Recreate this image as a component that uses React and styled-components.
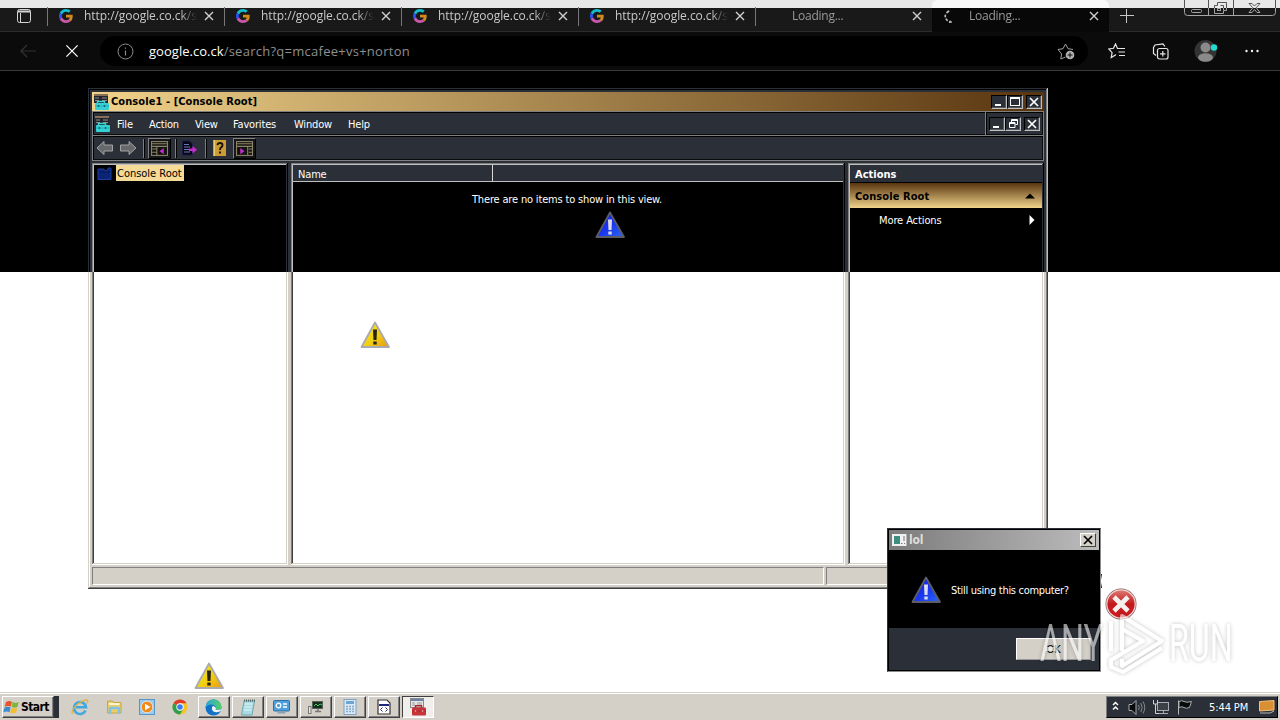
import React from "react";
import styled, { createGlobalStyle, css } from "styled-components";

const FACE = "#d4d0c8";
const FACE_INV = "#2b2f37";
const UI = `"DejaVu Sans Condensed", "DejaVu Sans", sans-serif`;
const EDGE_UI = `"Open Sans", "Noto Sans", sans-serif`;

// screen row where the inverted band ends
const SPLIT = 272;

const invert = (hex) =>
  "#" + (0xffffff - parseInt(hex.slice(1), 16)).toString(16).padStart(6, "0");

// vertical fill: inverted above `at`, normal below
const fill = (color, at) =>
  `linear-gradient(to bottom, ${invert(color)} ${at}px, ${color} ${at}px)`;

// one 1px ring of a classic bevel, as four background strips
const ring = (i, tl, br, at) => {
  const len = `calc(100% - ${2 * i}px)`;
  return [
    `${fill(br, at - i)} right ${i}px top ${i}px / 1px ${len} no-repeat`,
    `linear-gradient(${br}, ${br}) left ${i}px bottom ${i}px / ${len} 1px no-repeat`,
    `${fill(tl, at - i)} left ${i}px top ${i}px / 1px ${len} no-repeat`,
    `linear-gradient(${invert(tl)}, ${invert(tl)}) left ${i}px top ${i}px / ${len} 1px no-repeat`,
  ].join(",");
};

const GlobalStyles = createGlobalStyle`
  * { box-sizing: border-box; }
  body {
    margin: 0;
    background: #fff;
    overflow: hidden;
    font-family: ${UI};
    font-stretch: condensed;
    font-size: 11px;
    letter-spacing: -0.17px;
  }
  svg { display: block; flex: none; }
`;

const Desktop = styled.div`
  position: relative;
  width: 1280px;
  height: 720px;
  overflow: hidden;
  display: flex;
  flex-direction: column;
  background: #fff;
`;

/* ---------- browser ---------- */

const Browser = styled.div`
  height: ${SPLIT}px;
  background: #000;
  font-family: ${EDGE_UI};
  font-stretch: normal;
  letter-spacing: 0;
`;

const TabStrip = styled.div`
  display: flex;
  height: 32px;
  background: linear-gradient(#e8e8e8 8px, #191919 8px);
  border-bottom: 1px solid #2c2c2c;
`;

const TabActions = styled.div`
  width: 47px;
  padding: 9px 0 0 17px;
`;

const Tab = styled.div`
  display: flex;
  align-items: center;
  width: 177px;
  height: 32px;
  padding: 0 10px 0 12px;
  font-size: 12px;
  color: ${(p) => (p.$dim ? "#9a9a9a" : "#c9c9c9")};
  background: ${(p) =>
    p.$active
      ? "linear-gradient(#f8f8f8 8px, #080808 8px)"
      : "linear-gradient(#777, #777) left 7px / 1px 19px no-repeat"};
  ${(p) => p.$active && "border-radius: 6px 6px 0 0;"}
`;

const TabIcon = styled.span`
  width: 14px;
  height: 14px;
  margin-right: 11px;
`;

const TabTitle = styled.span`
  flex: 1;
  height: 18px;
  line-height: 17px;
  overflow: hidden;
  white-space: nowrap;
  letter-spacing: ${(p) => (p.$dim ? "-0.25px" : "-0.05px")};
  -webkit-mask-image: linear-gradient(to right, #000 96px, transparent 113px);
`;

const NewTab = styled.div`
  width: 75px;
  padding: 9px 0 0 11px;
`;

const AddressRow = styled.div`
  display: flex;
  align-items: center;
  height: 39px;
  background: #0b0b0b;
  border-bottom: 1px solid #3a3a3a;
`;

const NavButton = styled.div`
  display: flex;
  justify-content: center;
  width: ${(p) => p.$w}px;
`;

const UrlPill = styled.div`
  display: flex;
  align-items: center;
  width: 988px;
  height: 30px;
  padding: 0 13px 0 17px;
  border-radius: 15px;
  background: #000;
  font-size: 13px;
  color: #8f8f8f;
`;

const Url = styled.span`
  flex: 1;
  margin-left: 15px;
  letter-spacing: 0.26px;
  white-space: nowrap;
  b {
    font-weight: 400;
    letter-spacing: 0.03px;
    color: #fff;
  }
`;

/* ---------- management console ---------- */

const Console = styled.div`
  position: absolute;
  left: 88px;
  top: 88px;
  width: 960px;
  height: 501px;
  padding: 4px;
  display: flex;
  flex-direction: column;
  background: ${ring(0, FACE, "#404040", 184)}, ${ring(1, "#ffffff", "#808080", 184)},
    ${fill(FACE, 184)};
  color: #fff;
`;

const TitleBar = styled.div`
  display: flex;
  align-items: center;
  height: 19px;
  padding: 0 2px 0 1px;
  background: linear-gradient(to right, #f0d28a, #59350f);
  color: #000;
  font-weight: 700;
  letter-spacing: 0.08px;
`;

const TitleText = styled.span`
  flex: 1;
  margin-left: 2px;
`;

const Caption = styled.span`
  display: flex;
  align-items: center;
  justify-content: center;
  width: 16px;
  height: 14px;
  margin-left: ${(p) => p.$gap || 0}px;
  background: ${FACE_INV};
  border: 1px solid;
  border-color: #000 #bfbfbf #bfbfbf #000;
  box-shadow: inset -1px -1px #55585f;
`;

const Bar = styled.div`
  display: flex;
  height: 25px;
  border: 1px solid #7f7f7f;
  border-width: ${(p) => (p.$top ? "1px" : "0 1px 1px")};
  box-shadow: inset 1px 1px #000, inset -1px -1px #0a0b0d;
`;

const MenuBar = styled.div`
  display: flex;
  align-items: center;
  width: 893px;
  padding: 1px 0 0 1px;
  border-right: 1px solid #7f7f7f;
  box-shadow: 1px 0 #000;
`;

const MenuItem = styled.span`
  width: ${(p) => p.$w}px;
`;

const ChildButtons = styled.div`
  display: flex;
  align-items: center;
  padding-left: 3px;
`;

const Tools = styled.div`
  display: flex;
  align-items: center;
  padding-left: 3px;
`;

const Tool = styled.span`
  display: flex;
  align-items: center;
  justify-content: center;
  width: 23px;
  height: 21px;
  ${(p) =>
    p.$down &&
    css`
      background: #15171b;
      border: 1px solid;
      border-color: #7f7f7f #000 #000 #7f7f7f;
    `}
`;

const Divider = styled.span`
  width: 1px;
  height: 19px;
  margin: 0 ${(p) => p.$r}px 0 ${(p) => p.$l}px;
  background: #7f7f7f;
  box-shadow: 1px 0 #000;
`;

const Panes = styled.div`
  display: flex;
  gap: 3px;
  height: 402px;
  margin: 2px 0;
`;

const Pane = styled.div`
  width: ${(p) => p.$w}px;
  padding: 2px;
  background: ${ring(0, "#808080", "#ffffff", 109)}, ${ring(1, "#404040", FACE, 109)},
    ${fill("#ffffff", 109)};
`;

const TreeNode = styled.div`
  display: flex;
  align-items: center;
  height: 16px;
  padding-left: 3px;
`;

const Selected = styled.span`
  height: 16px;
  margin-left: 4px;
  padding: 0 2px 0 1px;
  line-height: 17px;
  background: #f5db95;
  color: #000;
  letter-spacing: -0.02px;
`;

const ListHeader = styled.div`
  display: flex;
  height: 17px;
  line-height: 19px;
  background: ${FACE_INV};
  border-bottom: 1px solid #bfbfbf;
  span {
    width: 200px;
    padding-left: 5px;
    border-right: 1px solid #d8d8d8;
  }
`;

const Empty = styled.div`
  padding: 11px 2px 0 0;
  text-align: center;
`;

const ActionsHeader = styled.div`
  height: 18px;
  padding-left: 5px;
  line-height: 19px;
  background: ${FACE_INV};
  border-bottom: 1px solid #000;
  font-weight: 700;
  letter-spacing: 0.02px;
`;

const ActionsGroup = styled.div`
  display: flex;
  align-items: center;
  justify-content: space-between;
  height: 25px;
  padding: 1px 7px 0 5px;
  background: linear-gradient(#59350f, #f0d48c);
  color: #000;
  font-weight: 700;
  letter-spacing: 0.08px;
`;

const ActionItem = styled.div`
  display: flex;
  align-items: center;
  justify-content: space-between;
  height: 24px;
  padding: 0 7px 0 29px;
  letter-spacing: -0.1px;
`;

const StatusBar = styled.div`
  display: flex;
  gap: 2px;
  height: 18px;
`;

const StatusCell = styled.div`
  width: ${(p) => p.$w}px;
  border: 1px solid;
  border-color: #808080 #fff #fff #808080;
`;

/* ---------- message box ---------- */

const Dialog = styled.div`
  position: absolute;
  left: 887px;
  top: 528px;
  width: 214px;
  height: 144px;
  display: flex;
  flex-direction: column;
  padding: 1px;
  background: #000;
  border: 1px solid;
  border-color: ${FACE_INV} #8c8c8c #8c8c8c ${FACE_INV};
  color: #fff;
`;

const DialogTitle = styled.div`
  display: flex;
  align-items: center;
  height: 20px;
  padding: 0 3px 0 3px;
  background: linear-gradient(to right, #7c7c7c, #bcbcbc);
  color: #dedcd6;
  font-weight: 700;
  font-size: 12px;
`;

const DialogClose = styled.span`
  display: flex;
  align-items: center;
  justify-content: center;
  width: 16px;
  height: 14px;
  background: ${FACE};
  border: 1px solid;
  border-color: #fff #404040 #404040 #fff;
`;

const DialogBody = styled.div`
  display: flex;
  align-items: center;
  gap: 9px;
  height: 78px;
  padding: 2px 0 0 22px;
  letter-spacing: -0.3px;
`;

const DialogFooter = styled.div`
  display: flex;
  justify-content: flex-end;
  flex: 1;
  padding: 10px 8px 0 0;
  background: ${FACE_INV};
`;

const OkButton = styled.div`
  width: 75px;
  height: 22px;
  line-height: 21px;
  text-align: center;
  background: ${FACE};
  border: 1px solid;
  border-color: #fff #9a9a9a #9a9a9a #fff;
  color: #000;
`;

/* ---------- loose things on the screen ---------- */

const Sprite = styled.div`
  position: absolute;
  left: ${(p) => p.$x}px;
  top: ${(p) => p.$y}px;
`;

const Watermark = styled.div`
  position: absolute;
  left: 1040px;
  top: 613px;
  display: flex;
  align-items: center;
  filter: drop-shadow(0 0 2px rgba(0, 0, 0, 0.4));
  opacity: 0.58;
`;

const WatermarkWord = styled.span`
  width: ${(p) => p.$w}px;
  height: 57px;
  line-height: 55px;
  font-family: Roboto, sans-serif;
  font-stretch: normal;
  font-size: 52px;
  letter-spacing: 0;
  color: #fff;
  white-space: nowrap;
  span {
    display: inline-block;
    transform: scaleX(${(p) => p.$scale});
    transform-origin: left;
  }
`;

/* ---------- taskbar ---------- */

const Taskbar = styled.div`
  display: flex;
  align-items: flex-start;
  height: 28px;
  margin-top: auto;
  padding: 2px 2px 0;
  border-top: 1px solid ${FACE};
  background: ${FACE};
  box-shadow: inset 0 1px #fff;
  z-index: 1;
`;

const Raised = css`
  background: ${FACE};
  border: 1px solid;
  border-color: #fff #404040 #404040 #fff;
  box-shadow: inset -1px -1px #808080;
`;

const Start = styled.div`
  display: flex;
  align-items: center;
  width: 52px;
  height: 22px;
  margin-top: 1px;
  ${Raised}
  color: #000;
  font-size: 12px;
  font-weight: 700;
  letter-spacing: -0.6px;
`;

const Grip = styled.div`
  width: 5px;
  height: 22px;
  margin-top: 1px;
  background: ${FACE_INV};
`;

const QuickLaunch = styled.div`
  display: flex;
  align-items: center;
  gap: 16.5px;
  height: 23px;
  margin: 0 10px 0 12px;
`;

const TaskButton = styled.div`
  display: flex;
  align-items: center;
  justify-content: center;
  width: 32px;
  height: 22px;
  margin: 1px 2px 0 0;
  ${(p) =>
    p.$active
      ? css`
          background: #f1efec;
          border: 1px solid;
          border-color: #404040 #fff #fff #404040;
        `
      : Raised}
`;

const Tray = styled.div`
  display: flex;
  align-items: center;
  width: 172px;
  height: 22px;
  margin: 1px 0 0 auto;
  padding: 0 2px 0 5px;
  background: ${FACE_INV};
  border: 1px solid;
  border-color: #7f7f7f #000 #000 #7f7f7f;
  color: #fff;
`;

const Clock = styled.span`
  flex: 1;
  padding-left: 15px;
  letter-spacing: -0.1px;
`;

/* ---------- icons ---------- */

const Cross = ({ size = 9, color = "#fff", w = 1.4 }) => (
  <svg width={size} height={size} viewBox="0 0 10 10">
    <path d="M1 1L9 9M9 1L1 9" stroke={color} strokeWidth={w} fill="none" />
  </svg>
);

const GoogleG = () => (
  <svg width="14" height="14" viewBox="0 0 48 48">
    <path fill="#15bcca" d="M24 9.5c3.54 0 6.71 1.22 9.21 3.6l6.85-6.85C35.9 2.38 30.47 0 24 0 14.62 0 6.51 5.38 2.56 13.22l7.98 6.19C12.43 13.72 17.74 9.5 24 9.5z" />
    <path fill="#d08a1e" d="M46.98 24.55c0-1.57-.15-3.09-.38-4.55H24v9.02h12.94c-.58 2.96-2.26 5.48-4.78 7.18l7.73 6c4.51-4.18 7.09-10.36 7.09-17.65z" />
    <path fill="#2a50fa" d="M10.53 28.59c-.48-1.45-.76-2.99-.76-4.59s.27-3.14.76-4.59l-7.98-6.19C.92 16.46 0 20.12 0 24c0 3.88.92 7.54 2.56 10.78l7.97-6.19z" />
    <path fill="#cb57ac" d="M24 48c6.48 0 11.93-2.13 15.89-5.81l-7.73-6c-2.15 1.45-4.92 2.3-8.16 2.3-6.26 0-11.57-4.22-13.47-9.91l-7.98 6.19C6.51 42.62 14.62 48 24 48z" />
  </svg>
);

const Spinner = () => (
  <svg width="14" height="14" viewBox="0 0 14 14" fill="none" stroke="#b8b8b8" strokeWidth="1.8" strokeLinecap="round">
    <path d="M4.500 2.200L3 3.500M1.300 6.500v1M2.300 10.300l.8 1" />
    <circle cx="6.3" cy="13" r=".6" />
  </svg>
);

const WindowControls = () => (
  <svg width="96" height="20" viewBox="0 0 96 20" fill="none" stroke="url(#cap)">
    <defs>
      <linearGradient id="cap" gradientUnits="userSpaceOnUse" x1="0" y1="0" x2="0" y2="16">
        <stop offset=".5" stopColor="#555" />
        <stop offset=".5" stopColor="#a5a5a5" />
      </linearGradient>
    </defs>
    <path d="M.5 0V12.500Q.5 15.500 3.500 15.500H88.500Q91.500 15.500 91.500 12.500V0M24.500 0V15.500M49.500 0V15.500" />
    <rect x="7.500" y="9.500" width="10" height="3" rx="1" />
    <path d="M33.500 2.500H42.500V10.500H39.500V13.500H30.500V5.500H33.500ZM36.500 5.500H39.500V10" />
    <rect x="33.500" y="8.500" width="3" height="2" />
    <path d="M65 3.500h3l2.500 2.500L73 3.500h3l-3.800 4.300L76 12.500h-3l-2.500-3L68 12.500h-3l3.800-4.700z" />
  </svg>
);

const Snapin = () => (
  <svg width="16" height="16" viewBox="0 0 16 16">
    <rect x="1" y="0" width="14" height="9" fill="#23262c" />
    <path d="M1 1h14" stroke="#8a6f58" strokeWidth="2" />
    <path d="M2 4h4M2 6.500h4M9 4h5M9 6.500h5" stroke="#8d8d8d" />
    <path d="M4.500 10V7.500h7V10" fill="none" stroke="#37d3d6" strokeWidth="1.500" />
    <rect x="2" y="9" width="14" height="7" rx="1" fill="#35d0d4" />
    <path d="M2 12h14" stroke="#25aeb4" />
    <path d="M5.500 11v2M11.500 11v2" stroke="#0a6d75" strokeWidth="1.500" />
  </svg>
);

const Arrow = ({ flip }) => (
  <svg width="18" height="16" viewBox="0 0 18 16">
    <path
      d="M1 8L8 1.500V5h8.500v6H8v3.500z"
      transform={flip ? "matrix(-1 0 0 1 18 0)" : undefined}
      fill="#66686b"
      stroke="#a3a3a3"
    />
  </svg>
);

const PanelIcon = ({ flip }) => (
  <svg width="17" height="15" viewBox="0 0 16 14">
    <rect x=".5" y=".5" width="15" height="13" fill="#14130f" stroke="#8b8468" />
    <path d="M1 2.500h14M1 5h14" stroke="#8b8468" />
    {flip ? (
      <>
        <path d="M11 5v8M12 7.500h3M12 10.500h3" stroke="#8b8468" />
        <path d="M4 6.500v6l4-3z" fill="#c32bd0" />
      </>
    ) : (
      <>
        <path d="M5.500 5v8M1 7.500h4M1 10.500h4" stroke="#8b8468" />
        <path d="M12 6.500v6l-4-3z" fill="#c32bd0" />
      </>
    )}
  </svg>
);

const ExportIcon = () => (
  <svg width="17" height="16" viewBox="0 0 17 16">
    <path d="M1.500 1h7l3 3v11h-10z" fill="#060614" stroke="#1b1d48" />
    <path d="M3 4.500h5M3 7h6M3 9.500h5M3 12h6" stroke="#6f78b4" />
    <path d="M8 8.500h3.500V6L16 9.800l-4.500 3.800V11H8z" fill="#c32bd0" />
  </svg>
);

const HelpIcon = () => (
  <svg width="14" height="16" viewBox="0 0 14 16">
    <rect width="13" height="16" fill="#cb9d33" />
    <path d="M1.500 0v16" stroke="#f0cf7b" />
    <path d="M4.500 5.200Q4.700 3 7 3q2.500 0 2.500 2.200Q9.500 6.500 8 7.500 7 8.300 7 10" fill="none" stroke="#17140a" strokeWidth="1.900" />
    <rect x="6" y="11.500" width="2" height="2" fill="#17140a" />
  </svg>
);

const Folder = () => (
  <svg width="15" height="13" viewBox="0 0 15 13">
    <path d="M1 2h6l1 1.500h2L11 1h3v11.500H1z" fill="#0c2474" stroke="#1c3c9c" />
    <path d="M2 5h11" stroke="#091a58" />
  </svg>
);

const Warning = ({ blue }) => {
  const id = blue ? "warnB" : "warnY";
  return (
    <svg width="31" height="28" viewBox="0 0 31 28">
      <defs>
        <linearGradient id={id} x1="0" y1="0" x2="1" y2="1">
          <stop offset="0" stopColor={blue ? "#1018e0" : "#f6ee1a"} />
          <stop offset=".55" stopColor={blue ? "#1a38f0" : "#f2cf14"} />
          <stop offset="1" stopColor={blue ? "#2d68f4" : "#e89a10"} />
        </linearGradient>
      </defs>
      <path d="M15 1.500L29 26H1.500Z" fill={`url(#${id})`} stroke={blue ? "#5d5d66" : "#a9a9b0"} strokeWidth="1.800" strokeLinejoin="round" />
      <path d="M13 8.500h4l-.5 10.500h-3z" fill={blue ? "#dcdcea" : "#262310"} />
      <rect x="13.300" y="20.500" width="3.400" height="3" fill={blue ? "#dcdcea" : "#262310"} />
    </svg>
  );
};

const ErrorIcon = () => (
  <svg width="32" height="32" viewBox="0 0 32 32">
    <defs>
      <linearGradient id="err" x1="0" y1="0" x2="0" y2="1">
        <stop offset="0" stopColor="#dd7770" />
        <stop offset=".5" stopColor="#c21a1c" />
        <stop offset="1" stopColor="#d01c22" />
      </linearGradient>
    </defs>
    <circle cx="16" cy="16" r="15.500" fill="#8f5a5a" />
    <circle cx="16" cy="16" r="14.800" fill="#f0d8d6" />
    <circle cx="16" cy="16" r="13.600" fill="url(#err)" />
    <path d="M9 9L23 23M23 9L9 23" stroke="#f4f0ee" strokeWidth="4.600" />
  </svg>
);

const PlayMark = () => (
  <svg width="62" height="62" viewBox="0 0 62 62" fill="none" stroke="#fff" strokeWidth="4" strokeLinejoin="round">
    <path d="M4 8V38M15 38V3L55 28L15 53V46" />
    <path d="M15 16L36 28L4 47V54L16 59L55 35" />
  </svg>
);

const Flag = () => (
  <svg width="18" height="17" viewBox="0 0 19 18">
    <path d="M3 3.500q3-2.500 6.500-.5L8.300 8Q5 6.500 1.700 8.300z" fill="#e8552a" />
    <path d="M10.300 3.300q3 1.700 6.300 0L15.300 8.500q-3 1.500-6.200-.2z" fill="#7fb53a" />
    <path d="M1.500 9.200q3-1.700 6.500-.3l-1.200 5Q3.500 12.500.3 14.200z" fill="#3a8bd0" />
    <path d="M8.900 9.200q3.200 1.600 6.200.2l-1.300 5q-3 1.500-6.200-.2z" fill="#f3bd2d" />
  </svg>
);

const IeIcon = () => (
  <svg width="18" height="18" viewBox="0 0 18 18" fill="none">
    <path d="M14.500 12.500A6 6 0 1 1 15 9.300H5" stroke="#42a8e2" strokeWidth="2.600" />
    <path d="M1.500 16C-.5 12 8 2.500 16 1.800q1.800.8-.2 3.700" stroke="#e3b13a" strokeWidth="1.300" />
  </svg>
);

const ExplorerIcon = () => (
  <svg width="17" height="16" viewBox="0 0 17 16">
    <path d="M1.500 2h5l1 1.500H15V14H1.500z" fill="#e9cd6a" stroke="#c9a644" />
    <path d="M3 5h10.500" stroke="#fff6cf" strokeWidth="2" />
    <path d="M4 15V10q0-1 1-1h7q1 0 1 1v5" fill="none" stroke="#7fc1e8" strokeWidth="2.500" />
  </svg>
);

const PlayerIcon = () => (
  <svg width="16" height="16" viewBox="0 0 16 16">
    <rect x=".5" y=".5" width="15" height="15" fill="#9ccbee" stroke="#5796c8" />
    <circle cx="8" cy="8" r="5.800" fill="#f08a1d" stroke="#fff" strokeWidth=".6" />
    <path d="M6 4.800v6.400L11.500 8z" fill="#fff" />
  </svg>
);

const ChromeIcon = () => (
  <svg width="16" height="16" viewBox="0 0 16 16">
    <circle cx="8" cy="8" r="7.500" fill="#f7c325" />
    <path d="M8 8L1.500 4.250A7.500 7.500 0 0 1 14.500 4.250H8z" fill="#dd3b2e" />
    <path d="M1.500 4.250A7.500 7.500 0 0 0 8 15.500L11.200 9.900 8 8z" fill="#2f9e4d" />
    <circle cx="8" cy="8" r="3.700" fill="#fff" />
    <circle cx="8" cy="8" r="2.800" fill="#3b7ded" />
  </svg>
);

const EdgeIcon = () => (
  <svg width="17" height="17" viewBox="0 0 17 17">
    <defs>
      <linearGradient id="edge" x1="0" y1="0" x2="1" y2="0">
        <stop offset="0" stopColor="#2aa6dc" />
        <stop offset="1" stopColor="#55cf63" />
      </linearGradient>
    </defs>
    <circle cx="8.500" cy="8.500" r="8" fill="#1272c8" />
    <path d="M.5 8.500A8 8 0 0 1 16.500 8q0 3-3.500 3H10q1.500-1.500.5-3.500Q9 5 5.500 5.500 2 6 .5 8.500z" fill="url(#edge)" />
    <path d="M8 6.800Q5.500 10 8.500 12.500q3 1.800 6.800-.3l1.700-2.500Q14.500 11.500 10.500 10.800 12 8.500 8 6.800z" fill="#eef5fa" />
  </svg>
);

const NotepadIcon = () => (
  <svg width="16" height="17" viewBox="0 0 16 17">
    <path d="M4 2h10.500L12 16H1.500z" fill="#a9dbe2" stroke="#6fa6b2" />
    <path d="M5 5h7.500M4.500 8h7.500M4 11h7.500" stroke="#e6f8fa" />
    <path d="M4 1.500h11" stroke="#566" strokeDasharray="1 1" strokeWidth="2" />
  </svg>
);

const ControlIcon = () => (
  <svg width="17" height="16" viewBox="0 0 17 16">
    <rect x=".5" y="1.500" width="16" height="10.500" rx="1" fill="#4f9fdc" stroke="#2c6ea6" />
    <circle cx="5.500" cy="6.500" r="2.300" fill="none" stroke="#fff" strokeWidth="1.300" />
    <path d="M10 5h4M10 8h4" stroke="#fff" strokeWidth="1.300" />
    <path d="M4 14.500h9l-2-2.500H6z" fill="#8aa2b4" />
  </svg>
);

const MonitorIcon = () => (
  <svg width="16" height="16" viewBox="0 0 16 16">
    <rect x="4.500" y="2.500" width="10" height="7" fill="#12301d" stroke="#59635c" />
    <path d="M6 7l2-2 2 2 2-2 2 1" stroke="#48c864" fill="none" />
    <path d="M7 12.500h6M10 10v2.500" stroke="#777" strokeWidth="1.500" />
    <rect x=".5" y="7.500" width="2.500" height="7" fill="#e9e9e9" stroke="#777" />
  </svg>
);

const CalcIcon = () => (
  <svg width="14" height="16" viewBox="0 0 14 16">
    <rect x="1" y=".5" width="12" height="15" fill="#d9e9f5" stroke="#7ba4c4" />
    <rect x="3" y="2" width="8" height="3" fill="#6ea6d2" />
    <path d="M3 7.500h8M3 10h8M3 12.500h8" stroke="#87abc8" strokeWidth="1.500" strokeDasharray="2 1" />
  </svg>
);

const ScriptIcon = () => (
  <svg width="14" height="16" viewBox="0 0 14 16">
    <path d="M1 1h9l3 3v11H1z" fill="#fff" stroke="#333" strokeWidth="1.200" />
    <rect x="2" y="5" width="10" height="2" fill="#202a7a" />
    <path d="M5.500 8.500L3.500 10.500l2 2M8.500 8.500l2 2-2 2" stroke="#222a70" fill="none" />
  </svg>
);

const ToolboxIcon = () => (
  <svg width="18" height="18" viewBox="0 0 18 18">
    <rect x="1.500" y=".5" width="13" height="9" fill="#e6e6e6" stroke="#8a8a8a" />
    <path d="M2 2h12" stroke="#6b84a8" strokeWidth="2" />
    <path d="M3 5h3M3 7h3M8 5h5M8 7h5" stroke="#999" />
    <path d="M6.500 10V7.800h6V10" fill="none" stroke="#a22a2e" strokeWidth="1.400" />
    <rect x="3" y="9.500" width="14" height="8" rx="1.200" fill="#c93438" />
    <path d="M3 13h14" stroke="#a8262b" />
    <path d="M6.500 12.300v1.500M13.500 12.300v1.500" stroke="#e8b0b0" strokeWidth="1.400" />
  </svg>
);

const TrayIcons = () => (
  <svg width="82" height="20" viewBox="0 0 82 20" fill="none" stroke="#a9acb0">
    <path d="M1 8l2.500-2.500L6 8M1 12.500L3.500 10 6 12.500" stroke="#fff" strokeWidth="1.500" />
    <path d="M17 7.500h3l4-4v14l-4-4h-3z" fill="#08090b" />
    <path d="M26.500 8q1.500 2.500 0 5M28.800 6q2.700 4.500 0 9M31 4.500q3.500 6 0 12" stroke="#878a8f" />
    <rect x="45.500" y="5.500" width="11" height="8" fill="#3c4048" />
    <path d="M47 16.500h9M51.500 14v2.500" />
    <path d="M41.500 3v4h4V3M43.500 7v9.500H47" stroke="#d0d0d0" />
    <path d="M66.500 3.500v14" stroke="#b9b9b9" />
    <path d="M67 4.500q3-1.500 5 0t7.500 0l-2 6q-3.500 1.500-5.500 0t-5 0z" fill="#08090b" />
  </svg>
);

const AppIcon = () => (
  <svg width="15" height="12" viewBox="0 0 15 12">
    <rect x=".5" y=".5" width="13.500" height="11" fill="#f2f2f2" stroke="#eee" />
    <rect x="2" y="2" width="6" height="8" fill="#3f8f80" />
    <path d="M12 2v5M9 9.500h1.500M12 9.500h1" stroke="#777" />
  </svg>
);

/* ---------- page ---------- */

const resultTabs = [1, 2, 3, 4];
const menus = [
  ["File", 32],
  ["Action", 46],
  ["View", 38],
  ["Favorites", 61],
  ["Window", 54],
  ["Help", 40],
];
const quick = [IeIcon, ExplorerIcon, PlayerIcon, ChromeIcon];
const running = [EdgeIcon, NotepadIcon, ControlIcon, MonitorIcon, CalcIcon, ScriptIcon];

function BrowserWindow() {
  return (
    <Browser>
      <TabStrip>
        <TabActions>
          <svg width="14" height="14" viewBox="0 0 14 14" fill="none" stroke="#d5d5d5">
            <rect x=".5" y=".5" width="13" height="13" rx="2" />
            <path d="M1 2.500h12" strokeWidth="2" />
            <path d="M3.500 4v9" />
          </svg>
        </TabActions>
        {resultTabs.map((n) => (
          <Tab key={n}>
            <TabIcon><GoogleG /></TabIcon>
            <TabTitle>http://google.co.ck/s</TabTitle>
            <Cross size={10} color="#d0d0d0" />
          </Tab>
        ))}
        <Tab $dim>
          <TabIcon />
          <TabTitle $dim>Loading...</TabTitle>
          <Cross size={10} color="#d0d0d0" />
        </Tab>
        <Tab $dim $active>
          <TabIcon><Spinner /></TabIcon>
          <TabTitle $dim>Loading...</TabTitle>
          <Cross size={10} color="#d0d0d0" />
        </Tab>
        <NewTab>
          <svg width="14" height="14" viewBox="0 0 14 14" stroke="#c8c8c8">
            <path d="M0 6.500h14M6.500 0v14" />
          </svg>
        </NewTab>
        <WindowControls />
      </TabStrip>
      <AddressRow>
        <NavButton $w={56}>
          <svg width="16" height="14" viewBox="0 0 16 14" fill="none" stroke="#333">
            <path d="M16 7H1M7 1L1 7l6 6" strokeWidth="1.200" />
          </svg>
        </NavButton>
        <NavButton $w={32}><Cross size={14} w={0.9} /></NavButton>
        <NavButton $w={12} />
        <UrlPill>
          <svg width="17" height="17" viewBox="0 0 17 17" fill="none" stroke="#8c8c8c">
            <circle cx="8.500" cy="8.500" r="7.500" />
            <path d="M8.500 7.500v5M8.500 4.500v1.300" strokeWidth="1.200" />
          </svg>
          <Url><b>google.co.ck</b>/search?q=mcafee+vs+norton</Url>
          <svg width="18" height="18" viewBox="0 0 18 18" fill="none" stroke="#a0a0a0">
            <path d="M8.500 15l-4.700 2 .8-5L1 7.500l5-.8L8.500 2 11 6.700l5 .8" />
            <circle cx="13" cy="13" r="4.300" fill="#b2b2b2" stroke="none" />
            <path d="M13 10.500v5M10.500 13h5" stroke="#111" />
          </svg>
        </UrlPill>
        <NavButton $w={56}>
          <svg width="17" height="16" viewBox="0 0 17 16" fill="none" stroke="#e6e6e6" strokeWidth="1.200">
            <path d="M8 12.300L7.500 12l-4.300 2.500.9-4.900L.8 6l4.700-.7 2-4.300 2 4.500H17M10.500 9H17M11 12.500h6" />
          </svg>
        </NavButton>
        <NavButton $w={32}>
          <svg width="17" height="17" viewBox="0 0 17 17" fill="none" stroke="#e6e6e6" strokeWidth="1.200">
            <path d="M4 12.500L1.500 10.500V4.500L3 2l8-1 2 2.500" />
            <rect x="5.500" y="5.500" width="10.500" height="10.500" rx="2" />
            <path d="M10.800 8v5.500M8 10.800h5.500" />
          </svg>
        </NavButton>
        <NavButton $w={60}>
          <svg width="24" height="24" viewBox="0 0 24 24">
            <circle cx="11.500" cy="12" r="11" fill="#333" />
            <circle cx="11.500" cy="8.500" r="5" fill="#8a8a8a" />
            <ellipse cx="11.500" cy="18.500" rx="7.500" ry="4.200" fill="#8a8a8a" />
            <circle cx="20" cy="8.500" r="3.200" fill="#21dcd2" />
          </svg>
        </NavButton>
        <NavButton $w={31}>
          <svg width="14" height="4" viewBox="0 0 14 4" fill="#f2f2f2">
            <circle cx="1.500" cy="2" r="1.200" />
            <circle cx="7" cy="2" r="1.200" />
            <circle cx="12.500" cy="2" r="1.200" />
          </svg>
        </NavButton>
      </AddressRow>
    </Browser>
  );
}

const MinGlyph = () => (
  <svg width="10" height="10" viewBox="0 0 10 10"><path d="M1 8h6" stroke="#fff" strokeWidth="2" /></svg>
);

function ConsoleWindow() {
  return (
    <Console>
      <TitleBar>
        <Snapin />
        <TitleText>Console1 - [Console Root]</TitleText>
        <Caption><MinGlyph /></Caption>
        <Caption>
          <svg width="10" height="9" viewBox="0 0 10 9" fill="none" stroke="#fff">
            <rect x=".5" y=".5" width="9" height="8" /><path d="M0 1.500h10" />
          </svg>
        </Caption>
        <Caption $gap={3}><Cross size={10} w={1.7} /></Caption>
      </TitleBar>
      <Bar $top>
        <MenuBar>
          <Snapin />
          <MenuItem $w={7} />
          {menus.map(([label, w]) => (
            <MenuItem key={label} $w={w}>{label}</MenuItem>
          ))}
        </MenuBar>
        <ChildButtons>
          <Caption><MinGlyph /></Caption>
          <Caption>
            <svg width="9" height="9" viewBox="0 0 9 9" fill="none" stroke="#fff">
              <path d="M2.500 3V.5h6v5H6.500M2.500 1.500h6" />
              <path d="M.5 3.500h5.500v5H.5zM.5 4.500H6" />
            </svg>
          </Caption>
          <Caption $gap={3}><Cross size={10} w={1.7} /></Caption>
        </ChildButtons>
      </Bar>
      <Bar>
        <Tools>
          <Arrow />
          <MenuItem $w={5} />
          <Arrow flip />
          <Divider $l={6} $r={4} />
          <Tool $down><PanelIcon /></Tool>
          <Divider $l={4} $r={2} />
          <Tool><ExportIcon /></Tool>
          <Divider $l={4} $r={2} />
          <Tool><HelpIcon /></Tool>
          <MenuItem $w={2} />
          <Tool $down><PanelIcon flip /></Tool>
        </Tools>
      </Bar>
      <Panes>
        <Pane $w={196}>
          <TreeNode>
            <Folder />
            <Selected>Console Root</Selected>
          </TreeNode>
        </Pane>
        <Pane $w={554}>
          <ListHeader><span>Name</span></ListHeader>
          <Empty>There are no items to show in this view.</Empty>
        </Pane>
        <Pane $w={196}>
          <ActionsHeader>Actions</ActionsHeader>
          <ActionsGroup>
            Console Root
            <svg width="10" height="6" viewBox="0 0 10 6"><path d="M0 5.500L5 .5l5 5z" /></svg>
          </ActionsGroup>
          <ActionItem>
            More Actions
            <svg width="6" height="10" viewBox="0 0 6 10"><path d="M.5 0v10l5-5z" fill="#fff" /></svg>
          </ActionItem>
        </Pane>
      </Panes>
      <StatusBar>
        <StatusCell $w={732} />
        <StatusCell $w={218} />
      </StatusBar>
    </Console>
  );
}

export default function App() {
  return (
    <Desktop>
      <GlobalStyles />
      <BrowserWindow />
      <ConsoleWindow />
      <Sprite $x={595} $y={211}><Warning blue /></Sprite>
      <Sprite $x={360} $y={321}><Warning /></Sprite>
      <Sprite $x={194} $y={662}><Warning /></Sprite>
      <Sprite $x={1098} $y={572}>
        <svg width="4" height="18" viewBox="0 0 4 18"><path d="M3.500 2Q1 9 3.500 16" stroke="#111" fill="none" /></svg>
      </Sprite>
      <Dialog>
        <DialogTitle>
          <AppIcon />
          <TitleText>lol</TitleText>
          <DialogClose><Cross size={10} color="#000" w={1.7} /></DialogClose>
        </DialogTitle>
        <DialogBody>
          <Warning blue />
          <span>Still using this computer?</span>
        </DialogBody>
        <DialogFooter>
          <OkButton>OK</OkButton>
        </DialogFooter>
      </Dialog>
      <Sprite $x={1105} $y={588}><ErrorIcon /></Sprite>
      <Watermark>
        <WatermarkWord $w={67} $scale={0.62}><span>ANY</span></WatermarkWord>
        <PlayMark />
        <WatermarkWord $w={64} $scale={0.62}><span>RUN</span></WatermarkWord>
      </Watermark>
      <Taskbar>
        <Start><Flag />Start</Start>
        <Grip />
        <QuickLaunch>
          {quick.map((Icon, i) => <Icon key={i} />)}
        </QuickLaunch>
        {running.map((Icon, i) => (
          <TaskButton key={i}><Icon /></TaskButton>
        ))}
        <TaskButton $active><ToolboxIcon /></TaskButton>
        <Tray>
          <TrayIcons />
          <Clock>5:44 PM</Clock>
          <svg width="16" height="14" viewBox="0 0 16 14">
            <path d="M.5 1.500L15 .5V10L.5 11z" fill="#d98f33" stroke="#f0c27c" />
            <path d="M1 13h10l4-2" stroke="#b9b9b9" fill="none" />
          </svg>
        </Tray>
      </Taskbar>
    </Desktop>
  );
}
